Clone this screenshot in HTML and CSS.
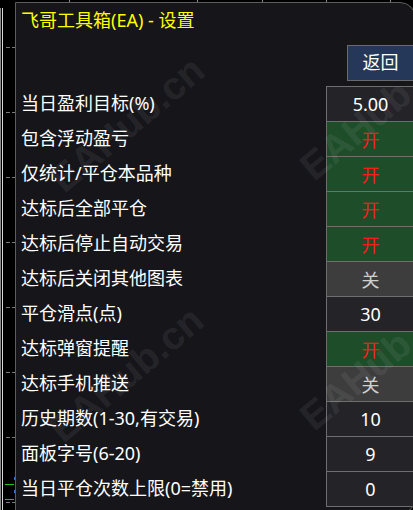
FILE: index.html
```html
<!DOCTYPE html>
<html lang="zh-CN">
<head>
<meta charset="utf-8">
<title>飞哥工具箱(EA) - 设置</title>
<link rel="stylesheet" href="styles.css">
</head>
<body>
<div class="screen">
  <svg class="chart" width="413" height="510" viewBox="0 0 413 510">
    <line x1="0.5" y1="8" x2="0.5" y2="510" stroke="#8a8a8a"/>
    <line x1="2.5" y1="8" x2="2.5" y2="510" stroke="#d8d8d8"/>
    <g stroke="#7a7a7a" stroke-dasharray="4 2">
      <line x1="6" y1="47.5" x2="15" y2="47.5"/>
      <line x1="6" y1="112.5" x2="15" y2="112.5"/>
      <line x1="6" y1="177.5" x2="15" y2="177.5"/>
      <line x1="6" y1="242.5" x2="15" y2="242.5"/>
      <line x1="6" y1="307.5" x2="15" y2="307.5"/>
      <line x1="6" y1="372.5" x2="15" y2="372.5"/>
      <line x1="6" y1="437.5" x2="15" y2="437.5"/>
      <line x1="6" y1="502.5" x2="15" y2="502.5"/>
    </g>
    <g stroke="#22c022">
      <line x1="5" y1="484.5" x2="14" y2="484.5"/>
      <line x1="5" y1="499.5" x2="14" y2="499.5"/>
    </g>
    <g fill="#3a7ad0">
      <rect x="14" y="477" width="1" height="3"/>
      <rect x="14" y="490" width="1" height="3"/>
    </g>
    <g stroke="#8a8a8a">
      <line x1="69.5" y1="0" x2="69.5" y2="2"/>
      <line x1="197.5" y1="0" x2="197.5" y2="2"/>
      <line x1="262.5" y1="0" x2="262.5" y2="2"/>
      <line x1="326.5" y1="0" x2="326.5" y2="2"/>
      <line x1="390.5" y1="0" x2="390.5" y2="2"/>
    </g>
  </svg>

  <div class="panel">
    <div class="title">飞哥工具箱(EA) - 设置</div>
    <div class="toolbar"><button class="back" type="button">返回</button></div>
    <div class="rows">
      <div class="row"><span class="label">当日盈利目标(%)</span><span class="val">5.00</span></div>
      <div class="row"><span class="label">包含浮动盈亏</span><span class="val on">开</span></div>
      <div class="row"><span class="label">仅统计/平仓本品种</span><span class="val on">开</span></div>
      <div class="row"><span class="label">达标后全部平仓</span><span class="val on">开</span></div>
      <div class="row"><span class="label">达标后停止自动交易</span><span class="val on">开</span></div>
      <div class="row"><span class="label">达标后关闭其他图表</span><span class="val off">关</span></div>
      <div class="row"><span class="label">平仓滑点(点)</span><span class="val">30</span></div>
      <div class="row"><span class="label">达标弹窗提醒</span><span class="val on">开</span></div>
      <div class="row"><span class="label">达标手机推送</span><span class="val off">关</span></div>
      <div class="row"><span class="label">历史期数(1-30,有交易)</span><span class="val">10</span></div>
      <div class="row"><span class="label">面板字号(6-20)</span><span class="val">9</span></div>
      <div class="row"><span class="label">当日平仓次数上限(0=禁用)</span><span class="val">0</span></div>
    </div>
    <div class="watermarks" aria-hidden="true">
      <span class="wm wm1">EAHub.cn</span>
      <span class="wm wm2">EAHub.cn</span>
      <span class="wm wm3">EAHub.cn</span>
      <span class="wm wm4">EAHub.cn</span>
    </div>
  </div>
</div>
</body>
</html>
```
FILE: styles.css
```css
html, body {
  margin: 0;
  padding: 0;
  background: #000;
  overflow: hidden;
}

.screen {
  position: relative;
  width: 413px;
  height: 510px;
  overflow: hidden;
  background: #000;
}

.chart {
  position: absolute;
  left: 0;
  top: 0;
  display: block;
}

.panel {
  position: absolute;
  left: 15px;
  top: 2px;
  width: 401px;
  height: 512px;
  box-sizing: border-box;
  border: 1px solid #5c5c5c;
  border-radius: 0 16px 16px 0;
  background: #16161a;
  overflow: hidden;
  padding: 5px 1px 0 5px;
  font-family: "Noto Sans", "Noto Sans CJK SC", sans-serif;
  font-size: 18px;
  font-weight: 400;
  color: #fff;
}

.title {
  line-height: 24px;
  height: 24px;
  color: #ffff00;
  white-space: nowrap;
}

.toolbar {
  display: flex;
  justify-content: flex-end;
  margin-top: 13px;
}

.back {
  width: 67px;
  height: 36px;
  box-sizing: border-box;
  margin: 0;
  padding: 0 0 2px 0;
  background: #25385a;
  border: 1px solid #6a6a6a;
  color: #fff;
  font: inherit;
  line-height: 1;
}

.rows {
  display: flex;
  flex-direction: column;
  margin-top: 5px;
}

.row {
  display: flex;
  height: 35px;
}

.label {
  flex: 1;
  display: flex;
  align-items: center;
  padding-bottom: 4px;
  white-space: nowrap;
}

.val {
  width: 88px;
  box-sizing: border-box;
  display: flex;
  align-items: center;
  justify-content: center;
  border-left: 1px solid #6e6e6e;
  border-top: 1px solid #6e6e6e;
  background: #242428;
  color: #fff;
}

.row:last-child .val {
  height: 36px;
  border-bottom: 1px solid #6e6e6e;
  padding-bottom: 1px;
}

.val.on {
  background: #1e4d2a;
  color: #ff1a1a;
}

.val.off {
  background: #3d3d3d;
  color: #cfcfcf;
}

.watermarks {
  position: absolute;
  inset: 0;
  pointer-events: none;
}

.wm {
  position: absolute;
  transform: translate(-50%, -50%) rotate(-40deg);
  font-family: "Liberation Sans", Arial, sans-serif;
  font-weight: bold;
  font-size: 39px;
  line-height: 1;
  white-space: nowrap;
  color: rgba(255, 255, 255, 0.085);
}

.wm1 { left: 111px; top: 121px; }
.wm2 { left: 361px; top: 109px; }
.wm3 { left: 110px; top: 371px; }
.wm4 { left: 361px; top: 359px; }
```
